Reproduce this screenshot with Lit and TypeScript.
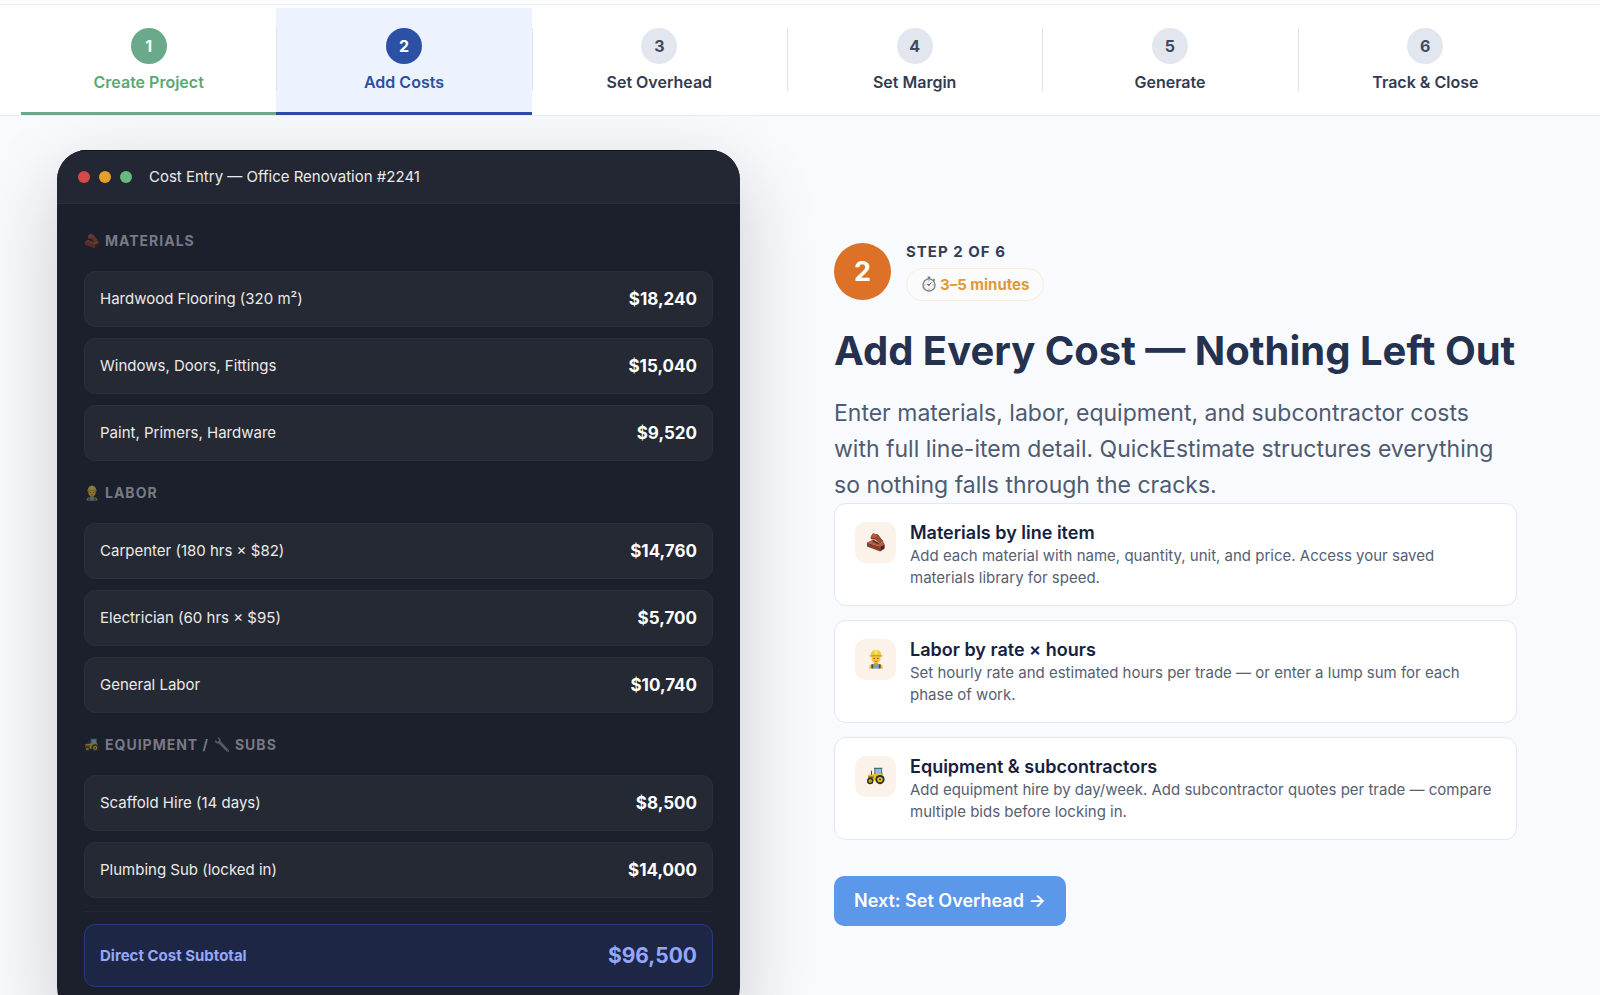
import { LitElement, html, css, svg, TemplateResult } from "lit";
import { customElement, property, state } from "lit/decorators.js";
import { classMap } from "lit/directives/class-map.js";

type GlyphName = "bricks" | "worker" | "tractor" | "wrench" | "stopwatch";

const glyphs: Record<GlyphName, TemplateResult> = {
  bricks: svg`
    <path d="M4.600 5.200 6.800 1.400 11.600 2.200 17.200 9.200 13.600 11.400 9.600 7.800 5 7.200Z" fill="#8a3f2b"/>
    <path d="M4.600 5.200 6.800 1.400 11.600 2.200 9.800 6Z" fill="#b0593f"/>
    <path d="M9.800 6 11.600 2.200 17.200 9.200 13.600 11.400Z" fill="#9c4a33"/>
    <path d="M1 10.400 5.200 8.600 10.400 10.200 13.600 11.400 17.200 9.600 18.600 12.200 14.200 14.600Z" fill="#b05b3f"/>
    <path d="M5.200 8.600 8 8 13.600 11.400 11.600 12Z" fill="#5c2318"/>
    <path d="M1 10.400 14.200 14.600V19.400L1 14.600Z" fill="#8a3d2a"/>
    <path d="M14.200 14.600 18.600 12.200V16.600L14.200 19.400Z" fill="#561f15"/>`,
  worker: svg`
    <path d="M3.200 19.500c0-3.400 2-4.900 6.800-4.900s6.800 1.500 6.800 4.900Z" fill="#f0b429"/>
    <path d="M7 15h6v4.500H7Z" fill="#6da3dc"/>
    <path d="M5.400 15.200h1.800v4.300H5.400ZM12.800 15.200h1.800v4.300h-1.800Z" fill="#4a5058"/>
    <path d="M8.200 12.400h3.600v3c-1 1-2.600 1-3.600 0Z" fill="#d99a1c"/>
    <ellipse cx="10" cy="9" rx="4.600" ry="5.200" fill="#fbc634"/>
    <path d="M4.600 7C4.600 3 6.800.8 10 .8S15.400 3 15.400 7Z" fill="#efcb3e"/>
    <path d="M3.800 6.600c3.600-1 8.800-1 12.400 0v1.200c-3.600-.8-8.800-.8-12.400 0Z" fill="#cda32a"/>
    <path d="M8.800 1h2.400v4.600H8.800Z" fill="#ffe270"/>
    <circle cx="8.100" cy="9.400" r=".7" fill="#5b3a12"/><circle cx="11.900" cy="9.400" r=".7" fill="#5b3a12"/>
    <path d="M8.400 12c1 .6 2.200.6 3.200 0" stroke="#a6541c" stroke-width=".8" fill="none"/>`,
  tractor: svg`
    <path d="M8.600 2.400h7l1 7H8Z" fill="#8cc0da"/>
    <path d="M8 1.800h8.400v1.100H8ZM8.400 2.400h.9v6.800h-.9ZM14.800 2.400h.9l.8 6h-.9Z" fill="#4f6a75"/>
    <path d="M1.800 8.800 9 8l7.400.2 1.800 3.600-4 3H2Z" fill="#e9bd20"/>
    <path d="M2.400 10.400h5v2h-5Z" fill="#74641c"/>
    <path d="M5 4.800h1v4H5Z" fill="#444"/>
    <circle cx="14" cy="13.600" r="4.600" fill="#2c302f"/><circle cx="14" cy="13.600" r="2.700" fill="#f1c51f"/><circle cx="14" cy="13.600" r="1" fill="#2c302f"/>
    <circle cx="4.200" cy="15" r="3.200" fill="#2c302f"/><circle cx="4.200" cy="15" r="1.700" fill="#f1c51f"/><circle cx="4.200" cy="15" r=".6" fill="#2c302f"/>`,
  wrench: svg`
    <path d="M1.200 3.400 3.800 5.900 5.900 5.300 6.400 3.200 3.900.8C6.600.2 9.200 2.600 8.400 5.600L18.600 16.200c1.200 1.600-.8 3.400-2.400 2.200L5.800 8C3 8.900.6 6.200 1.200 3.400Z" fill="#8f989f"/>
    <circle cx="17" cy="17" r=".9" fill="#3d444d"/>`,
  stopwatch: svg`
    <path d="M8.400.6h3.200v3H8.400ZM16 3.200l1.900 1.700-1.700 1.700-1.500-1.500Z" fill="#777d83"/>
    <circle cx="10" cy="11.200" r="7.600" fill="#f5f5f3" stroke="#7d8388" stroke-width="1.700"/>
    <path d="M10 5.200v1.500M10 15.700v1.500M4 11.200h1.500M14.500 11.200H16" stroke="#777d83"/>
    <path d="M10 11.400 13.400 8M10 11.400 7.400 10" stroke="#4c5258" stroke-width="1.100"/>
    <circle cx="10" cy="11.300" r="1" fill="#4c5258"/>`,
};

@customElement("qe-glyph")
export class QeGlyph extends LitElement {
  @property() name: GlyphName = "bricks";
  static styles = css`
    :host { display: inline-flex; width: 16px; height: 16px; flex: none; }
    .art { width: 100%; height: 100%; display: block; }
  `;
  render() {
    return html`<svg class="art" viewBox="0 0 20 20" aria-hidden="true">${glyphs[this.name]}</svg>`;
  }
}

const steps = ["Create Project", "Add Costs", "Set Overhead", "Set Margin", "Generate", "Track & Close"];

@customElement("step-nav")
export class StepNav extends LitElement {
  @property({ type: Number }) current = 2;
  static styles = css`
    :host { display: block; background: #fff; border-bottom: 1px solid #e8ecf3; }
    .rule { height: 4px; border-bottom: 1px solid #e9edf4; margin-bottom: 3px; }
    .list { display: grid; grid-template-columns: repeat(6, 1fr); margin: 0; padding: 0 47px 0 21px; list-style: none; }
    .item { display: flex; position: relative; }
    .item:not(:last-child)::after {
      content: ""; position: absolute; z-index: 1; right: -1px; top: 20px; bottom: 24px; width: 1px; background: #dfe4ec;
    }
    .step {
      flex: 1; display: flex; flex-direction: column; align-items: center; gap: 8px;
      padding: 20px 8px; border-bottom: 3px solid transparent;
      color: #323c50; font-size: 16px; line-height: 20px; font-weight: 600; text-decoration: none;
    }
    .num {
      display: grid; place-items: center; width: 36px; height: 36px; border-radius: 50%;
      background: #e2e6ee; color: #3f4a5d; font-weight: 700;
    }
    .done { color: #5aa873; border-color: #6aa98a; }
    .done .num { background: #6aa98a; color: #fff; }
    .active { color: #2d4fa2; border-color: #2a4ba3; background: #ecf2fe; }
    .active .num { background: #2c51a4; color: #fff; }
  `;
  render() {
    return html`
      <div class="rule"></div>
      <nav aria-label="Steps"><ol class="list">
        ${steps.map((label, i) => {
          const n = i + 1;
          return html`<li class="item">
            <a href="#step-${n}" class=${classMap({ step: true, done: n < this.current, active: n === this.current })}>
              <span class="num">${n}</span><span>${label}</span>
            </a></li>`;
        })}
      </ol></nav>`;
  }
}

interface Group { title: TemplateResult; rows: [string, string][]; }

const groups: Group[] = [
  {
    title: html`<qe-glyph name="bricks"></qe-glyph><span>MATERIALS</span>`,
    rows: [["Hardwood Flooring (320 m²)", "$18,240"], ["Windows, Doors, Fittings", "$15,040"], ["Paint, Primers, Hardware", "$9,520"]],
  },
  {
    title: html`<qe-glyph name="worker"></qe-glyph><span>LABOR</span>`,
    rows: [["Carpenter (180 hrs × $82)", "$14,760"], ["Electrician (60 hrs × $95)", "$5,700"], ["General Labor", "$10,740"]],
  },
  {
    title: html`<qe-glyph name="tractor"></qe-glyph><span>EQUIPMENT /</span><qe-glyph name="wrench"></qe-glyph><span>SUBS</span>`,
    rows: [["Scaffold Hire (14 days)", "$8,500"], ["Plumbing Sub (locked in)", "$14,000"]],
  },
];

@customElement("cost-window")
export class CostWindow extends LitElement {
  static styles = css`
    :host {
      display: block; border-radius: 30px; overflow: hidden; background: #1c1f2c; color: #eceae8;
      box-shadow: 0 26px 80px rgba(24, 24, 26, 0.2);
    }
    .bar {
      display: flex; align-items: center; padding: 15px 21px 16px; gap: 9px;
      background: #232733; border-top: 1px solid #11141d; border-bottom: 1px solid #2a2e3a;
    }
    .dot { width: 12px; height: 12px; border-radius: 50%; }
    .red { background: #d44a4a; }
    .amber { background: #e3a02b; }
    .green { background: #67b981; }
    .name { margin: 0 0 0 8px; font-size: 15px; line-height: 21px; font-weight: 400; }
    .body { padding: 27px 27px 30px; }
    .group + .group { margin-top: 22px; }
    .heading {
      display: flex; align-items: center; gap: 5px; margin: 0 0 20px; color: #777a84;
      font-size: 14px; line-height: 20px; font-weight: 700; letter-spacing: 1px;
    }
    .heading qe-glyph { opacity: 0.5; }
    .rows { display: grid; gap: 11px; margin: 0; padding: 0; list-style: none; }
    .row {
      display: flex; justify-content: space-between; align-items: center; padding: 15px;
      background: #252934; border: 1px solid #2b2f3b; border-radius: 11px;
      font-size: 15px; line-height: 24px;
    }
    .price { color: #fff; font-size: 17px; font-weight: 700; }
    .total {
      display: flex; justify-content: space-between; align-items: center; padding: 15px;
      background: #1e2645; border: 1px solid #253a80; border-radius: 11px;
      color: #93a7fb; font-size: 15px; line-height: 31px; font-weight: 700;
    }
    .split { height: 1px; margin: 13px 0 12px; background: #232733; }
    .sum { font-size: 21px; }
  `;
  render() {
    return html`
      <header class="bar">
        <span class="dot red"></span><span class="dot amber"></span><span class="dot green"></span>
        <h2 class="name">Cost Entry — Office Renovation #2241</h2>
      </header>
      <div class="body">
        ${groups.map((g) => html`<section class="group">
          <h3 class="heading">${g.title}</h3>
          <ul class="rows">
            ${g.rows.map(([label, price]) => html`<li class="row"><span>${label}</span><span class="price">${price}</span></li>`)}
          </ul>
        </section>`)}
        <div class="split"></div>
        <div class="total"><span>Direct Cost Subtotal</span><span class="sum">$96,500</span></div>
      </div>`;
  }
}

const features: { icon: GlyphName; title: string; text: string }[] = [
  { icon: "bricks", title: "Materials by line item", text: "Add each material with name, quantity, unit, and price. Access your saved materials library for speed." },
  { icon: "worker", title: "Labor by rate × hours", text: "Set hourly rate and estimated hours per trade — or enter a lump sum for each phase of work." },
  { icon: "tractor", title: "Equipment & subcontractors", text: "Add equipment hire by day/week. Add subcontractor quotes per trade — compare multiple bids before locking in." },
];

@customElement("step-detail")
export class StepDetail extends LitElement {
  static styles = css`
    :host { display: block; }
    .top { display: flex; align-items: center; gap: 15px; }
    .badge {
      display: grid; place-items: center; width: 57px; height: 57px; border-radius: 50%;
      background: #dc7127; color: #fff; font-size: 27px; font-weight: 700;
    }
    .meta { display: flex; flex-direction: column; align-items: flex-start; gap: 6px; }
    .count { color: #333e52; font-size: 15px; line-height: 20px; font-weight: 700; letter-spacing: 1px; }
    .time {
      display: flex; align-items: center; gap: 3px; padding: 5px 14px; border: 1px solid #f7ecda; border-radius: 17px;
      background: #fbfbfc; color: #e09a35; font-size: 15px; line-height: 21px; font-weight: 700;
    }
    .title { margin: 22px 0 0; color: #24314f; font-size: 40px; line-height: 56px; font-weight: 700; }
    .lead { margin: 16px 0 0; color: #4f5b70; font-size: 23px; line-height: 36px; }
    .features { display: grid; gap: 14px; margin: 0; padding: 0; list-style: none; }
    .feature {
      display: flex; gap: 14px; padding: 16px 20px; background: #fff;
      border: 1px solid #e2e7f1; border-radius: 12px;
    }
    .tile { display: grid; place-items: center; flex: none; width: 41px; height: 41px; margin-top: 2px; border-radius: 11px; background: #fbf3ea; }
    .tile qe-glyph { width: 20px; height: 20px; }
    .name { margin: 0; color: #16213f; font-size: 18px; line-height: 25px; font-weight: 600; }
    .text { margin: 0; color: #566073; font-size: 15px; line-height: 22px; }
    .next {
      margin-top: 36px; padding: 0 20px; border: 0; border-radius: 10px; background: #5b98e9; color: #fff;
      font: 600 18px/50px Inter, "Open Sans", sans-serif; cursor: pointer;
    }
  `;
  render() {
    return html`
      <div class="top">
        <span class="badge">2</span>
        <div class="meta">
          <span class="count">STEP 2 OF 6</span>
          <span class="time"><qe-glyph name="stopwatch"></qe-glyph>3–5 minutes</span>
        </div>
      </div>
      <h1 class="title">Add Every Cost — Nothing Left Out</h1>
      <p class="lead">Enter materials, labor, equipment, and subcontractor costs with full line-item detail. QuickEstimate structures everything so nothing falls through the cracks.</p>
      <ul class="features">
        ${features.map((f) => html`<li class="feature">
          <span class="tile"><qe-glyph name=${f.icon}></qe-glyph></span>
          <div><h2 class="name">${f.title}</h2><p class="text">${f.text}</p></div>
        </li>`)}
      </ul>
      <button class="next" type="button">Next: Set Overhead →</button>`;
  }
}

@customElement("app-root")
export class AppRoot extends LitElement {
  @state() private current = 2;
  static styles = css`
    :host {
      display: block; height: 100vh; overflow: hidden auto; scrollbar-width: none;
      background: #f8fafe; font-family: Inter, "Open Sans", sans-serif;
    }
    .stage {
      display: grid; grid-template-columns: minmax(0, 1fr) minmax(0, 1fr); align-items: center; gap: 94px;
      padding: 34px 83px 34px 57px; overflow: hidden;
    }
  `;
  render() {
    return html`
      <step-nav .current=${this.current}></step-nav>
      <main class="stage"><cost-window></cost-window><step-detail></step-detail></main>`;
  }
}
